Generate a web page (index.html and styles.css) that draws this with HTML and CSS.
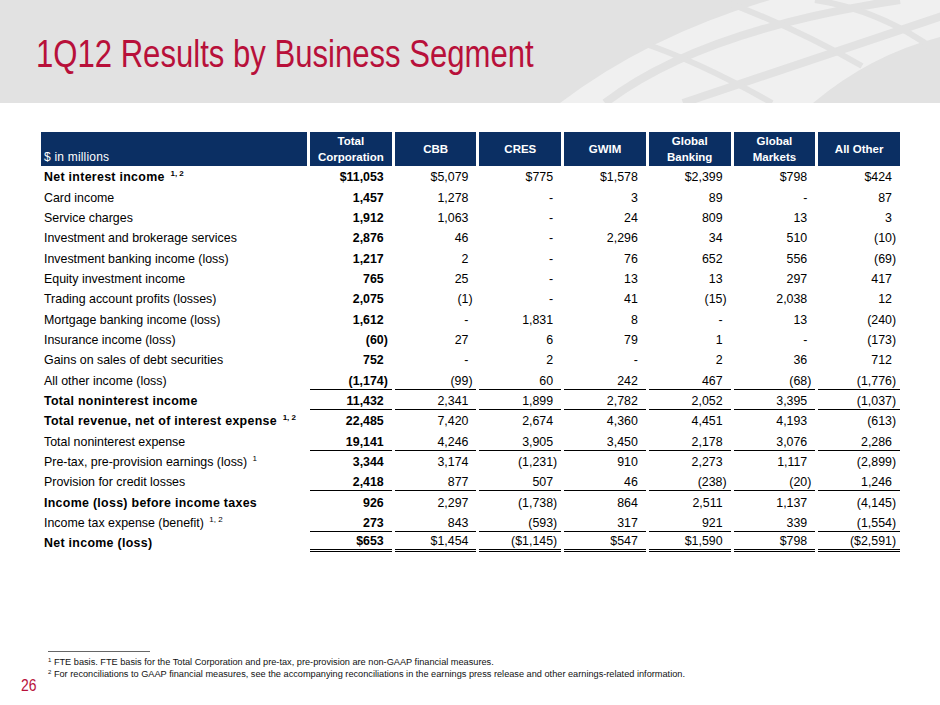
FILE: index.html
```html
<!DOCTYPE html>
<html lang="en">
<head>
<meta charset="utf-8">
<title>1Q12 Results by Business Segment</title>
<link rel="stylesheet" href="styles.css">
</head>
<body>
<div class="slide">
  <header class="band">
    <svg class="mark" viewBox="0 0 940 103" width="940" height="103" aria-hidden="true">
      <path class="tile" d="M 560 103 Q 650 35 770 0 L 940 0 L 940 37 Q 870 55 813 103 Z"/>
      <path class="gap" d="M 605 103 Q 700 30 900 0"/>
      <path class="gap" d="M 683 103 Q 780 70 945 15"/>
      <path class="gap x" d="M 640 42 Q 700 62 772 103"/>
      <path class="gap x" d="M 720 0 Q 790 25 862 66"/>
      <path class="gap x" d="M 815 0 Q 880 10 935 50"/>
    </svg>
    <h1 class="title">1Q12 Results by Business Segment</h1>
  </header>

  <main class="content">
    <table class="seg">
      <colgroup>
        <col class="c-label">
        <col class="c-num"><col class="c-num"><col class="c-num"><col class="c-num"><col class="c-num"><col class="c-num"><col class="c-num">
      </colgroup>
      <thead>
        <tr>
          <th class="hl">$ in millions</th>
          <th>Total<br>Corporation</th>
          <th>CBB</th>
          <th>CRES</th>
          <th>GWIM</th>
          <th>Global<br>Banking</th>
          <th>Global<br>Markets</th>
          <th>All Other</th>
        </tr>
      </thead>
      <tbody>
        <tr class="b">
          <td class="lbl">Net interest income <sup class="fn">1, 2</sup></td>
          <td class="n tc">$11,053</td><td class="n">$5,079</td><td class="n">$775</td><td class="n">$1,578</td><td class="n">$2,399</td><td class="n">$798</td><td class="n">$424</td>
        </tr>
        <tr>
          <td class="lbl">Card income</td>
          <td class="n tc">1,457</td><td class="n">1,278</td><td class="n">-</td><td class="n">3</td><td class="n">89</td><td class="n">-</td><td class="n">87</td>
        </tr>
        <tr>
          <td class="lbl">Service charges</td>
          <td class="n tc">1,912</td><td class="n">1,063</td><td class="n">-</td><td class="n">24</td><td class="n">809</td><td class="n">13</td><td class="n">3</td>
        </tr>
        <tr>
          <td class="lbl">Investment and brokerage services</td>
          <td class="n tc">2,876</td><td class="n">46</td><td class="n">-</td><td class="n">2,296</td><td class="n">34</td><td class="n">510</td><td class="n">(10<span class="p">)</span></td>
        </tr>
        <tr>
          <td class="lbl">Investment banking income (loss)</td>
          <td class="n tc">1,217</td><td class="n">2</td><td class="n">-</td><td class="n">76</td><td class="n">652</td><td class="n">556</td><td class="n">(69<span class="p">)</span></td>
        </tr>
        <tr>
          <td class="lbl">Equity investment income</td>
          <td class="n tc">765</td><td class="n">25</td><td class="n">-</td><td class="n">13</td><td class="n">13</td><td class="n">297</td><td class="n">417</td>
        </tr>
        <tr>
          <td class="lbl">Trading account profits (losses)</td>
          <td class="n tc">2,075</td><td class="n">(1<span class="p">)</span></td><td class="n">-</td><td class="n">41</td><td class="n">(15<span class="p">)</span></td><td class="n">2,038</td><td class="n">12</td>
        </tr>
        <tr>
          <td class="lbl">Mortgage banking income (loss)</td>
          <td class="n tc">1,612</td><td class="n">-</td><td class="n">1,831</td><td class="n">8</td><td class="n">-</td><td class="n">13</td><td class="n">(240<span class="p">)</span></td>
        </tr>
        <tr>
          <td class="lbl">Insurance income (loss)</td>
          <td class="n tc">(60<span class="p">)</span></td><td class="n">27</td><td class="n">6</td><td class="n">79</td><td class="n">1</td><td class="n">-</td><td class="n">(173<span class="p">)</span></td>
        </tr>
        <tr>
          <td class="lbl">Gains on sales of debt securities</td>
          <td class="n tc">752</td><td class="n">-</td><td class="n">2</td><td class="n">-</td><td class="n">2</td><td class="n">36</td><td class="n">712</td>
        </tr>
        <tr class="ul">
          <td class="lbl">All other income (loss)</td>
          <td class="n tc">(1,174<span class="p">)</span></td><td class="n">(99<span class="p">)</span></td><td class="n">60</td><td class="n">242</td><td class="n">467</td><td class="n">(68<span class="p">)</span></td><td class="n">(1,776<span class="p">)</span></td>
        </tr>
        <tr class="b ul">
          <td class="lbl">Total noninterest income</td>
          <td class="n tc">11,432</td><td class="n">2,341</td><td class="n">1,899</td><td class="n">2,782</td><td class="n">2,052</td><td class="n">3,395</td><td class="n">(1,037<span class="p">)</span></td>
        </tr>
        <tr class="b">
          <td class="lbl">Total revenue, net of interest expense <sup class="fn">1, 2</sup></td>
          <td class="n tc">22,485</td><td class="n">7,420</td><td class="n">2,674</td><td class="n">4,360</td><td class="n">4,451</td><td class="n">4,193</td><td class="n">(613<span class="p">)</span></td>
        </tr>
        <tr class="ul">
          <td class="lbl">Total noninterest expense</td>
          <td class="n tc">19,141</td><td class="n">4,246</td><td class="n">3,905</td><td class="n">3,450</td><td class="n">2,178</td><td class="n">3,076</td><td class="n">2,286</td>
        </tr>
        <tr>
          <td class="lbl">Pre-tax, pre-provision earnings (loss) <sup class="fn">1</sup></td>
          <td class="n tc">3,344</td><td class="n">3,174</td><td class="n">(1,231<span class="p">)</span></td><td class="n">910</td><td class="n">2,273</td><td class="n">1,117</td><td class="n">(2,899<span class="p">)</span></td>
        </tr>
        <tr class="ul">
          <td class="lbl">Provision for credit losses</td>
          <td class="n tc">2,418</td><td class="n">877</td><td class="n">507</td><td class="n">46</td><td class="n">(238<span class="p">)</span></td><td class="n">(20<span class="p">)</span></td><td class="n">1,246</td>
        </tr>
        <tr class="b">
          <td class="lbl">Income (loss) before income taxes</td>
          <td class="n tc">926</td><td class="n">2,297</td><td class="n">(1,738<span class="p">)</span></td><td class="n">864</td><td class="n">2,511</td><td class="n">1,137</td><td class="n">(4,145<span class="p">)</span></td>
        </tr>
        <tr class="ul">
          <td class="lbl">Income tax expense (benefit) <sup class="fn">1, 2</sup></td>
          <td class="n tc">273</td><td class="n">843</td><td class="n">(593<span class="p">)</span></td><td class="n">317</td><td class="n">921</td><td class="n">339</td><td class="n">(1,554<span class="p">)</span></td>
        </tr>
        <tr class="b dbl">
          <td class="lbl">Net income (loss)</td>
          <td class="n tc">$653</td><td class="n">$1,454</td><td class="n">($1,145<span class="p">)</span></td><td class="n">$547</td><td class="n">$1,590</td><td class="n">$798</td><td class="n">($2,591<span class="p">)</span></td>
        </tr>
      </tbody>
    </table>
  </main>

  <footer class="foot">
    <div class="notes">
      <div class="rule"></div>
      <p><sup class="nm">1</sup> FTE basis. FTE basis for the Total Corporation and pre-tax, pre-provision are non-GAAP financial measures.</p>
      <p><sup class="nm">2</sup> For reconciliations to GAAP financial measures, see the accompanying reconciliations in the earnings press release and other earnings-related information.</p>
    </div>
    <div class="pageno"><span class="narrow">26</span></div>
  </footer>
</div>
</body>
</html>
```

FILE: styles.css
```css
* { box-sizing: border-box; }

html, body {
  margin: 0;
  padding: 0;
}

body {
  width: 940px;
  height: 705px;
  overflow: hidden;
  background: #ffffff;
  color: #000000;
  font-family: "Liberation Sans", Arial, sans-serif;
}

.slide {
  width: 940px;
  height: 705px;
  display: flex;
  flex-direction: column;
}

/* ---------- header band ---------- */
.band {
  position: relative;
  flex: none;
  height: 103px;
  background: #e2e2e2;
  padding-left: 36px;
  overflow: hidden;
}

.mark {
  position: absolute;
  left: 0;
  top: 0;
  width: 940px;
  height: 103px;
}

.mark .tile { fill: #f0f0f0; }

.mark .gap {
  fill: none;
  stroke: #e2e2e2;
  stroke-width: 8;
}

.mark .gap.x { stroke-width: 6; }

.title {
  position: relative;
  display: inline-block;
  margin: 0;
  padding-top: 32px;
  font-family: "Liberation Sans", Arial, sans-serif;
  font-weight: normal;
  font-size: 38px;
  line-height: 44px;
  color: #b8103a;
  white-space: nowrap;
  transform: scaleX(0.818);
  transform-origin: 0 0;
}

/* ---------- table ---------- */
.content {
  flex: none;
  padding: 29px 0 0 38px;
}

.seg {
  border-collapse: separate;
  border-spacing: 3px 0;
  table-layout: fixed;
  width: 865px;
  font-size: 12.4px;
}

.c-label { width: 266px; }
.c-num { width: 81.7px; }

.seg thead th {
  height: 34px;
  padding: 1px 2px;
  background: #0b2f63;
  color: #ffffff;
  font-size: 11.5px;
  line-height: 16px;
  font-weight: bold;
  text-align: center;
  vertical-align: middle;
}

.seg thead th.hl {
  text-align: left;
  vertical-align: bottom;
  font-weight: normal;
  font-size: 12px;
  padding: 0 0 1px 3px;
  letter-spacing: 0.2px;
}

.seg tbody td {
  height: 20.33px;
  padding: 0 8px 1px 0;
  line-height: 16px;
  white-space: nowrap;
  vertical-align: bottom;
}

.seg td.lbl {
  text-align: left;
  padding-left: 3px;
}

.seg td.n { text-align: right; }
.seg td.tc { font-weight: bold; }

.seg tr.b td.lbl {
  font-weight: bold;
  letter-spacing: 0.3px;
}

.seg tr.ul td.n { border-bottom: 1px solid #000; padding-bottom: 0; }
.seg tr.dbl td.n { border-bottom: 3px double #000; padding-bottom: 0; }

.p { margin-right: -4.1px; }

.fn {
  font-size: 8px;
  line-height: 0;
  vertical-align: 5px;
  margin-left: 2px;
  letter-spacing: 0;
}

/* ---------- footer ---------- */
.foot {
  margin-top: auto;
  flex: none;
  padding-bottom: 13px;
}

.notes { padding-left: 48px; }

.rule {
  width: 102px;
  border-top: 1px solid #666;
  margin-bottom: 4px;
}

.notes p {
  margin: 0;
  font-size: 9.2px;
  line-height: 12px;
  color: #111;
  white-space: nowrap;
}

.nm {
  font-size: 6px;
  line-height: 0;
  vertical-align: 3px;
}

.pageno {
  padding-left: 21px;
  font-size: 17px;
  line-height: 12px;
  color: #b8103a;
}

.narrow {
  display: inline-block;
  transform: scaleX(0.82);
  transform-origin: 0 50%;
}
```
